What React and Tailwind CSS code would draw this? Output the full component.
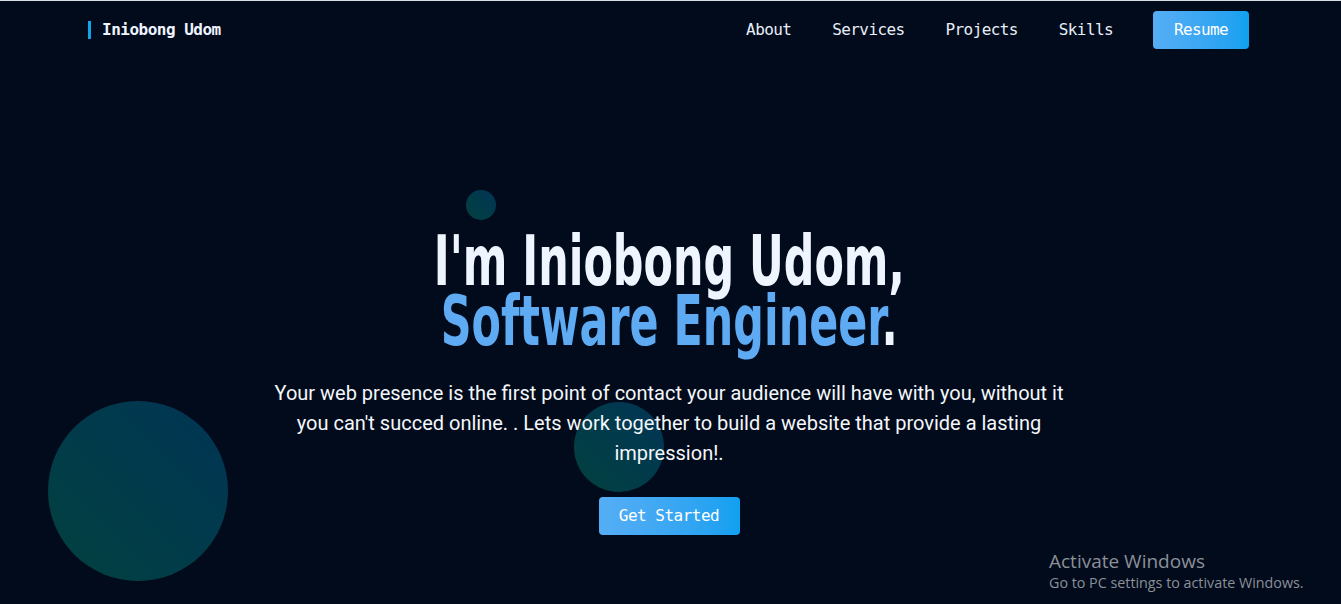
import React from "react";

const mono = { fontFamily: '"DejaVu Sans Mono", "Liberation Mono", monospace' };
const head = { fontFamily: '"DejaVu Sans Condensed", "DejaVu Sans", sans-serif', fontStretch: "condensed" };

export default function App() {
  return (
    <div className="relative w-[1341px] h-[604px] overflow-hidden bg-[#020b1b] border-t border-[#d9dce1]">
      {/* decorative circles */}
      <div className="absolute left-[466px] top-[189px] w-[30px] h-[30px] rounded-full bg-gradient-to-bl from-[#023455] to-[#03413f]" />
      <div className="absolute left-[48px] top-[400px] w-[180px] h-[180px] rounded-full bg-gradient-to-bl from-[#023455] to-[#03413f]" />
      <div className="absolute left-[574px] top-[401px] w-[90px] h-[90px] rounded-full bg-gradient-to-bl from-[#023455] to-[#03413f]" />

      <header className="relative flex items-center justify-between pl-[88px] pr-[92px] h-[57px]">
        <div className="flex items-center gap-[11px]">
          <span className="w-[3px] h-[18px] bg-[#0ea5e9]" />
          <span className="text-[16px] font-bold text-[#eef4ff] tracking-[-0.5px]" style={mono}>
            Iniobong Udom
          </span>
        </div>
        <nav className="flex items-center gap-[41px] text-[16px] tracking-[-0.6px] text-[#e8eef8]" style={mono}>
          <a>About</a>
          <a>Services</a>
          <a>Projects</a>
          <a>Skills</a>
          <button className="ml-[-1px] w-[96px] h-[38px] rounded-[4px] bg-gradient-to-r from-[#55aef5] to-[#0ea0f0] text-white text-[16px] tracking-[-0.6px]" style={mono}>
            Resume
          </button>
        </nav>
      </header>

      <main className="relative flex flex-col items-center pt-[173px] pr-[3px]">
        <h1 className="scale-x-[0.68] text-center font-bold text-[70px] leading-[60px] text-[#eef5ff] whitespace-nowrap" style={head}>
          I'm Iniobong Udom,
          <br />
          <span className="text-[#5eaaf3]">Software Engineer</span>.
        </h1>
        <p
          className="mt-[27px] w-[800px] text-center text-[20px] leading-[30px] text-[#f4f7fb]"
          style={{ fontFamily: 'Roboto, "Liberation Sans", sans-serif' }}
        >
          Your web presence is the first point of contact your audience will have with you, without it you can't succed online. . Lets work together to build a website that provide a lasting impression!.
        </p>
        <button
          className="mt-[29px] w-[141px] h-[38px] rounded-[4px] bg-gradient-to-r from-[#55aef5] to-[#0ea0f0] text-white text-[16px] tracking-[-0.5px]"
          style={mono}
        >
          Get Started
        </button>
      </main>

      <div
        className="absolute left-[1049px] top-[548px] text-[#8b9099]"
        style={{ fontFamily: '"Open Sans", "Noto Sans", sans-serif' }}
      >
        <div className="text-[19px] leading-[24px]">Activate Windows</div>
        <div className="text-[14.3px] leading-[20px]">Go to PC settings to activate Windows.</div>
      </div>
    </div>
  );
}
